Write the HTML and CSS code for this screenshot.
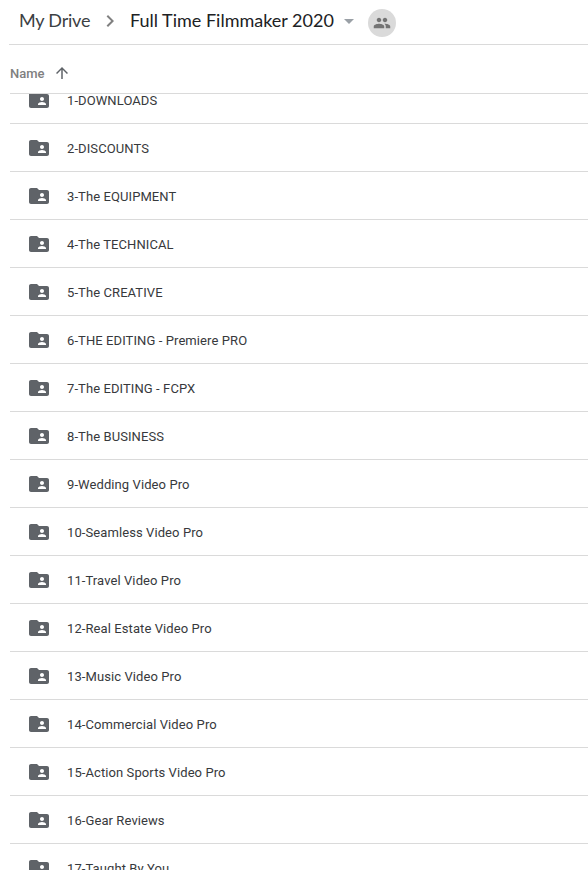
FILE: index.html
```html
<!DOCTYPE html>
<html lang="en">
<head>
    <meta charset="utf-8"/>
    <title>Full Time Filmmaker 2020</title>
    <link rel="stylesheet" href="styles.css">
</head>
<body>
<svg class="symbols">
    <symbol id="folder" viewBox="0 0 24 24">
        <path d="M20 6h-8l-2-2H4c-1.1 0-1.99.9-1.99 2L2 18c0 1.1.9 2 2 2h16c1.1 0 2-.9 2-2V8c0-1.1-.9-2-2-2zm-5 3c1.1 0 2 .9 2 2s-.9 2-2 2-2-.9-2-2 .9-2 2-2zm4 8h-8v-1c0-1.33 2.67-2 4-2s4 .67 4 2v1z"/>
    </symbol>
</svg>
<div class="drive">
    <div class="breadcrumb">
        <span class="crumb parent">My Drive</span>
        <svg class="chevron" viewBox="0 0 24 24"><path d="M10 6L8.59 7.41 13.17 12l-4.58 4.59L10 18l6-6z"/></svg>
        <span class="crumb current">Full Time Filmmaker 2020</span>
        <svg class="dropdown" viewBox="0 0 24 24"><path d="M7 10l5 5 5-5z"/></svg>
        <span class="shared">
            <svg viewBox="0 0 24 24"><path d="M16 11c1.66 0 2.99-1.34 2.99-3S17.66 5 16 5c-1.66 0-3 1.34-3 3s1.34 3 3 3zm-8 0c1.66 0 2.99-1.34 2.99-3S9.66 5 8 5C6.34 5 5 6.34 5 8s1.34 3 3 3zm0 2c-2.33 0-7 1.17-7 3.5V19h14v-2.5c0-2.33-4.67-3.5-7-3.5zm8 0c-.29 0-.62.02-.97.05 1.16.84 1.97 1.97 1.97 3.45V19h6v-2.5c0-2.33-4.67-3.5-7-3.5z"/></svg>
        </span>
    </div>
    <div class="columns">
        <span>Name</span>
        <svg class="sort" viewBox="0 0 24 24"><path d="M4 12l1.41 1.41L11 7.83V20h2V7.83l5.58 5.59L20 12l-8-8-8 8z"/></svg>
    </div>
    <div class="list">
        <ul class="rows">
            <li><svg><use href="#folder"/></svg><span>1-DOWNLOADS</span></li>
            <li><svg><use href="#folder"/></svg><span>2-DISCOUNTS</span></li>
            <li><svg><use href="#folder"/></svg><span>3-The EQUIPMENT</span></li>
            <li><svg><use href="#folder"/></svg><span>4-The TECHNICAL</span></li>
            <li><svg><use href="#folder"/></svg><span>5-The CREATIVE</span></li>
            <li><svg><use href="#folder"/></svg><span>6-THE EDITING - Premiere PRO</span></li>
            <li><svg><use href="#folder"/></svg><span>7-The EDITING - FCPX</span></li>
            <li><svg><use href="#folder"/></svg><span>8-The BUSINESS</span></li>
            <li><svg><use href="#folder"/></svg><span>9-Wedding Video Pro</span></li>
            <li><svg><use href="#folder"/></svg><span>10-Seamless Video Pro</span></li>
            <li><svg><use href="#folder"/></svg><span>11-Travel Video Pro</span></li>
            <li><svg><use href="#folder"/></svg><span>12-Real Estate Video Pro</span></li>
            <li><svg><use href="#folder"/></svg><span>13-Music Video Pro</span></li>
            <li><svg><use href="#folder"/></svg><span>14-Commercial Video Pro</span></li>
            <li><svg><use href="#folder"/></svg><span>15-Action Sports Video Pro</span></li>
            <li><svg><use href="#folder"/></svg><span>16-Gear Reviews</span></li>
            <li><svg><use href="#folder"/></svg><span>17-Taught By You</span></li>
        </ul>
    </div>
</div>
</body>
</html>
```
FILE: styles.css
```css
*{
    box-sizing: border-box;
}
body{
    margin: 0;
    background: #fff;
    font-family: Roboto, "Liberation Sans", sans-serif;
}
.symbols{
    display: none;
}
.drive{
    display: flex;
    flex-direction: column;
    height: 870px;
    overflow: hidden;
}
.breadcrumb{
    display: flex;
    align-items: center;
    flex: none;
    height: 45px;
    margin-left: 9px;
    padding: 0 0 2px 10px;
    border-bottom: 1px solid #dadada;
}
.crumb{
    padding-bottom: 2px;
    font-family: Lato, Roboto, sans-serif;
    font-size: 18px;
    line-height: 24px;
    white-space: nowrap;
}
.parent{
    width: 79px;
    color: #3c4043;
    letter-spacing: -0.2px;
}
.current{
    width: 207px;
    margin-left: 8px;
    color: #202124;
    letter-spacing: 0;
}
.chevron{
    width: 24px;
    height: 24px;
    fill: #808080;
}
.dropdown{
    width: 24px;
    height: 24px;
    fill: #9aa0a6;
}
.shared{
    display: flex;
    align-items: center;
    justify-content: center;
    width: 28px;
    height: 28px;
    margin: 4px 0 0 7px;
    border-radius: 50%;
    background: #dadada;
}
.shared svg{
    width: 18px;
    height: 18px;
    fill: #737373;
}
.columns{
    display: flex;
    align-items: center;
    flex: none;
    height: 49px;
    margin-left: 10px;
    padding-top: 8px;
    border-bottom: 1px solid #dadada;
    color: #808080;
    font-size: 13px;
    font-weight: 500;
}
.columns span{
    width: 43px;
}
.sort{
    width: 18px;
    height: 18px;
    fill: #5f6368;
}
.list{
    flex: 1;
    min-height: 0;
    margin-left: 10px;
    overflow: hidden;
}
/* list is scrolled down a little, so the first row is cut */
.rows{
    margin: -18px 0 0;
    padding: 0;
    list-style: none;
}
.rows li{
    display: flex;
    align-items: center;
    height: 48px;
    padding: 1px 0 0 17px;
    border-bottom: 1px solid #dadada;
    color: #37393c;
    font-size: 13px;
    font-weight: 450;
    line-height: 16px;
    letter-spacing: 0.09px;
}
.rows span{
    padding-top: 2px;
}
.rows svg{
    width: 24px;
    height: 24px;
    margin-right: 16px;
    fill: #5f6368;
}
```
